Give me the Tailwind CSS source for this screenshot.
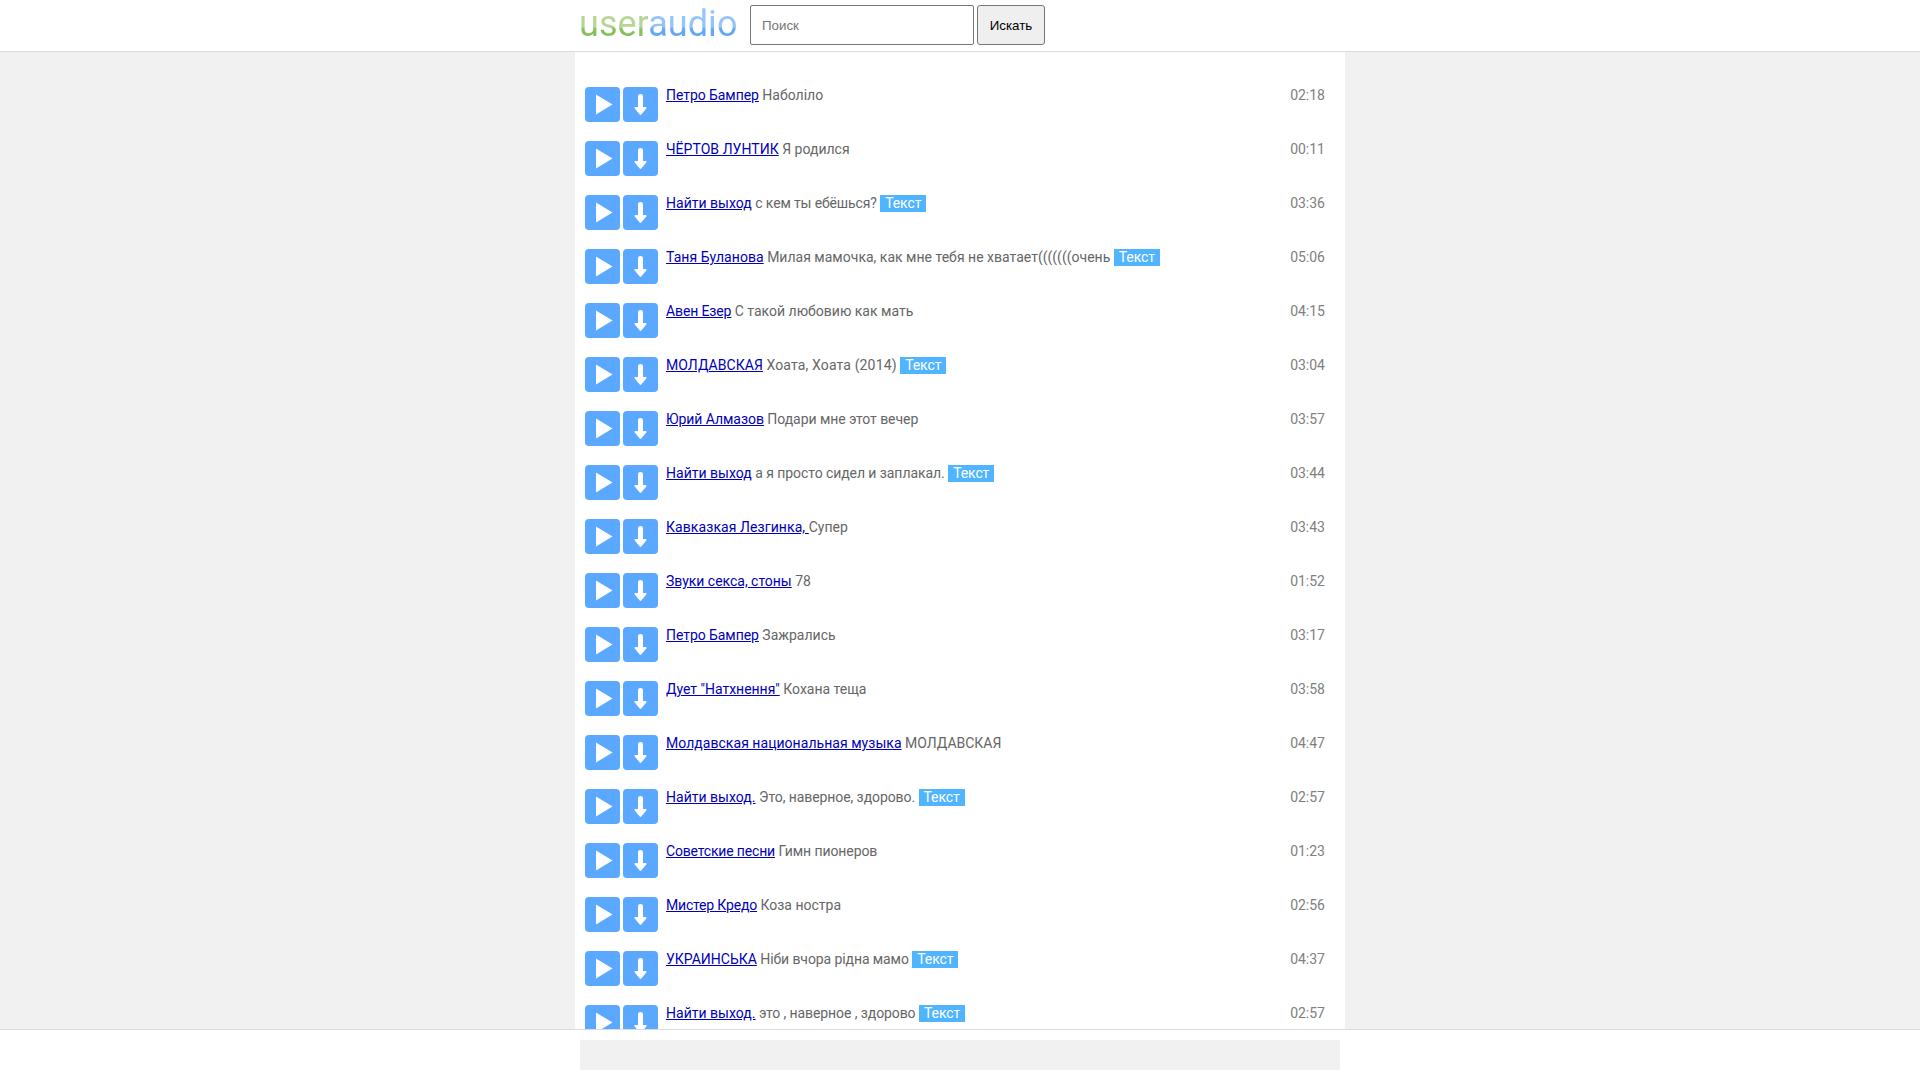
<!DOCTYPE html>
<html lang="ru">
<head>
<meta charset="utf-8">
<title>useraudio</title>
<script src="https://cdn.jsdelivr.net/npm/@tailwindcss/browser@4"></script>
</head>
<body class="flex h-screen flex-col overflow-hidden bg-[#f1f1f1] font-['Roboto',sans-serif] text-sm text-[#666]">
<header class="h-[52px] shrink-0 border-b border-[#dcdcdc] bg-white">
  <div class="mx-auto flex w-[770px] items-start pl-1 pt-[5px]">
    <a class="mr-px mt-px w-[170px] whitespace-nowrap text-[36px] leading-[36px] tracking-[0.05px]"><span class="bg-linear-to-b from-[#b5d696] from-[56%] to-[#86c05a] to-[62%] bg-clip-text text-transparent">user</span><span class="bg-linear-to-b from-[#94c4fc] from-[56%] to-[#62a8f6] to-[62%] bg-clip-text text-transparent">audio</span></a>
    <input type="text" placeholder="Поиск" class="h-10 w-[224px] rounded-[2px] border border-[#767676] bg-white px-[11px] font-['Liberation_Sans',sans-serif] text-[13.333px] placeholder:text-[#757575]">
    <button class="ml-[3px] h-10 w-[68px] rounded-[3px] border border-[#767676] bg-[#efefef] pt-px font-['Liberation_Sans',sans-serif] text-[13.333px] font-normal text-black">Искать</button>
  </div>
</header>
<main class="mx-auto min-h-0 w-[770px] flex-1 overflow-hidden bg-white pl-[10px] pr-5 pt-[35px]">
  <ul id="tracks"></ul>
</main>
<footer class="h-[51px] shrink-0 border-t border-[#dcdcdc] bg-white pt-[10px]">
  <div class="mx-auto h-[30px] w-[760px] bg-[#f1f1f1]"></div>
</footer>
<template id="row">
  <li class="flex h-[54px] items-start">
    <svg class="mr-[3px] size-[35px] shrink-0" viewBox="0 0 35 35"><rect width="35" height="35" rx="4" fill="#5aa8ff"/><path d="M11 7.500v20L27.500 17.500z" fill="#fff"/></svg>
    <svg class="mr-2 size-[35px] shrink-0" viewBox="0 0 35 35"><rect width="35" height="35" rx="4" fill="#5aa8ff"/><path d="M15 9q0-2 2.500-2t2.500 2v11h2.500q2 0 .8 1.500l-5 6q-.8.900-1.600 0l-5-6q-1.200-1.500.8-1.500h2.500z" fill="#fff"/></svg>
    <p class="flex-1 leading-[17px]"><a class="text-[#0000b8] underline"></a> <span></span> <b class="bg-[#50b4ff] px-[5px] pb-px font-normal tracking-[-0.1px] text-white">Текст</b></p>
    <time class="leading-[17px] text-[#808080]"></time>
  </li>
</template>
<script>
// artist, title, length, has lyrics, artist tracking (px), title tracking (px)
const tracks = [
  ['Петро Бампер','Наболіло','02:18',0,-.06,0],
  ['ЧЁРТОВ ЛУНТИК','Я родился','00:11',0,.04,0],
  ['Найти выход','с кем ты ебёшься?','03:36',1,.02,-.14],
  ['Таня Буланова','Милая мамочка, как мне тебя не хватает(((((((очень','05:06',1,.05,.01],
  ['Авен Езер','С такой любовию как мать','04:15',0,-.13,0],
  ['МОЛДАВСКАЯ','Хоата, Хоата (2014)','03:04',1,.06,.14],
  ['Юрий Алмазов','Подари мне этот вечер','03:57',0,-.05,-.06],
  ['Найти выход','а я просто сидел и заплакал.','03:44',1,.02,-.07],
  ['Кавказкая Лезгинка, ','Супер','03:43',0,.08,0],
  ['Звуки секса, стоны','78','01:52',0,-.02,0],
  ['Петро Бампер','Зажрались','03:17',0,-.06,0],
  ['Дует "Натхнення"','Кохана теща','03:58',0,-.02,0],
  ['Молдавская национальная музыка','МОЛДАВСКАЯ','04:47',0,.04,0],
  ['Найти выход.','Это, наверное, здорово.','02:57',1,.02,-.08],
  ['Советские песни','Гимн пионеров','01:23',0,-.17,-.08],
  ['Мистер Кредо','Коза ностра','02:56',0,-.18,0],
  ['УКРАИНСЬКА','Ніби вчора рідна мамо','04:37',1,0,-.09],
  ['Найти выход.','это , наверное , здорово','02:57',1,.02,-.09],
];
const list = document.getElementById('tracks');
for (const [artist, title, length, hasLyrics, artistTracking, titleTracking] of tracks) {
  const row = document.getElementById('row').content.cloneNode(true);
  const link = row.querySelector('a'), name = row.querySelector('span');
  link.textContent = artist;
  link.style.letterSpacing = artistTracking + 'px';
  name.textContent = title;
  name.style.letterSpacing = titleTracking + 'px';
  row.querySelector('time').textContent = length;
  if (!hasLyrics) row.querySelector('b').remove();
  list.append(row);
}
</script>
</body>
</html>
